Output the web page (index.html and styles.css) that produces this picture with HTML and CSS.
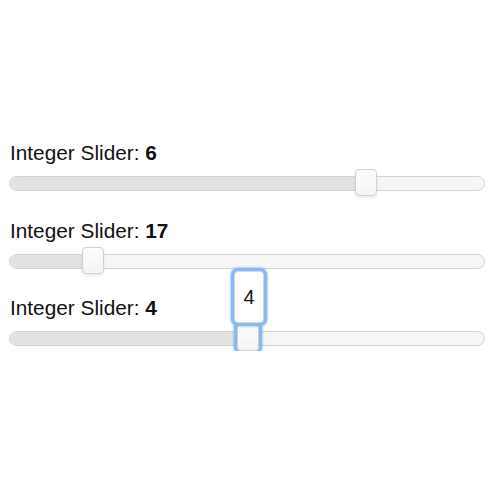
FILE: index.html
```html
<!DOCTYPE html>
<html>
<head>
<meta charset="utf-8">
<link rel="stylesheet" href="styles.css">
</head>
<body>
<div class="sliders">
  <div class="block">
    <div class="label">Integer Slider: <b>6</b></div>
    <div class="slider">
      <div class="track"><div class="fill" style="width:357px"></div></div>
      <div class="handle" style="left:346px"></div>
    </div>
  </div>
  <div class="block">
    <div class="label">Integer Slider: <b>17</b></div>
    <div class="slider">
      <div class="track"><div class="fill" style="width:84px"></div></div>
      <div class="handle" style="left:73px"></div>
    </div>
  </div>
  <div class="block">
    <div class="label">Integer Slider: <b>4</b></div>
    <div class="slider">
      <div class="track"><div class="fill" style="width:239px"></div></div>
      <div class="handle focused" style="left:228px">
        <div class="tip">4</div>
      </div>
    </div>
  </div>
</div>
</body>
</html>
```
FILE: styles.css
```css
html, body {
  margin: 0;
  background: #fff;
}
body {
  font-family: "Liberation Sans", Arial, sans-serif;
  color: #111;
}
.sliders {
  padding: 141px 15px 0 9px;
  display: flex;
  flex-direction: column;
  gap: 22.5px;
}
.block {
  display: flex;
  flex-direction: column;
  gap: 4px;
}
.label {
  font-size: 20.8px;
  line-height: 24px;
  height: 24px;
  padding-left: 1px;
}
.label b {
  font-weight: bold;
}
.slider {
  position: relative;
  height: 27px;
  width: 476px;
}
.track {
  position: absolute;
  left: 0;
  right: 0;
  top: 7px;
  height: 15px;
  box-sizing: border-box;
  border: 1px solid #d2d2d2;
  border-radius: 8px;
  background: #f6f6f6;
  overflow: hidden;
}
.fill {
  height: 100%;
  background: #e2e2e2;
}
.handle {
  position: absolute;
  top: 0;
  width: 22px;
  height: 27px;
  box-sizing: border-box;
  border: 1px solid #d0d0d0;
  border-radius: 4px;
  background: linear-gradient(#fdfdfd, #f4f4f4);
  box-shadow: 0 2px 3px rgba(0,0,0,0.08);
}
.handle.focused {
  box-shadow: 0 0 0 3px #86b8f7, 0 0 2px 4px rgba(120,170,240,0.5);
}
.tip {
  position: absolute;
  left: -4px;
  bottom: 27px;
  width: 30px;
  height: 52px;
  box-sizing: border-box;
  border: 1px solid #d8d8d8;
  border-radius: 4px;
  background: #fff;
  font-size: 20px;
  line-height: 50px;
  text-align: center;
  color: #111;
  box-shadow: 0 0 0 3px #86b8f7, 0 0 2px 4px rgba(120,170,240,0.5);
}
```
